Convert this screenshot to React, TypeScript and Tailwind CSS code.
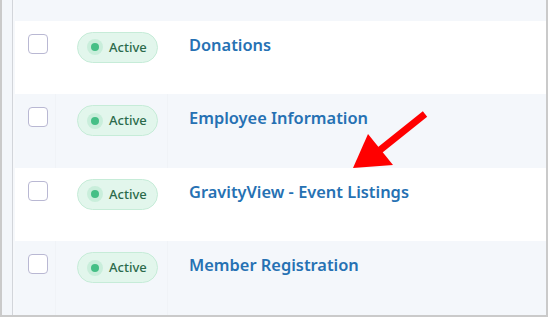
import React from "react";

type Form = { id: number; title: string };

const forms: Form[] = [
  { id: 1, title: "Donations" },
  { id: 2, title: "Employee Information" },
  { id: 3, title: "GravityView - Event Listings" },
  { id: 4, title: "Member Registration" },
];

const StatusBadge: React.FC = () => (
  <span className="inline-flex items-center h-[31px] pl-[9px] pr-[10px] rounded-full bg-[#e2f6ec] border border-[#c6ecd8]">
    <span className="flex items-center justify-center w-[16px] h-[16px] rounded-full bg-[#c9eedb]">
      <span className="w-[8px] h-[8px] rounded-full bg-[#45bf86]" />
    </span>
    <span className="ml-[6px] text-[13px] font-medium text-[#2b6b4b]">Active</span>
  </span>
);

const FormRow: React.FC<{ form: Form; striped: boolean }> = ({ form, striped }) => (
  <div className={`flex h-[74px] ${striped ? "bg-[#f4f7fb]" : "bg-white"}`}>
    <div className={`w-[41px] pl-[13px] pt-[13px] ${striped ? "border-r border-[#f0f3f7]" : ""}`}>
      <span className="block w-[20px] h-[20px] rounded-[4px] border-[1.5px] border-[#b9b8d3] bg-white" />
    </div>
    <div className={`w-[112px] pl-[21px] pt-[11px] ${striped ? "border-r border-[#f0f3f7]" : ""}`}>
      <StatusBadge />
    </div>
    <div className="flex-1 pl-[21px] pt-[12px]">
      <a className="text-[16.4px] leading-[24px] font-semibold text-[#2671b3]">{form.title}</a>
    </div>
  </div>
);

const App: React.FC = () => {
  return (
    <div
      className="relative w-[548px] h-[317px] overflow-hidden bg-white border-l-2 border-r-2 border-b-2 border-[#cacaca] flex"
      style={{ fontFamily: '"Noto Sans", "Open Sans", sans-serif' }}
    >
      {/* left gutter */}
      <div className="w-[11px] bg-[#f3f6fa] border-r border-[#d2d5da]" />
      <div className="w-[2px] bg-[#f6f8fb]" />

      <div className="flex-1 flex flex-col">
        <div className="h-[21px] bg-[#f4f7fb]" />
        {forms.map((form, i) => (
          <FormRow key={form.id} form={form} striped={i % 2 === 1} />
        ))}
      </div>

      {/* red pointer arrow */}
      <svg className="absolute left-0 top-0 pointer-events-none" width="548" height="317">
        <line x1="423" y1="114" x2="378" y2="150" stroke="#ff0000" strokeWidth="7" />
        <polygon points="351,168 366,134 391,165" fill="#ff0000" />
      </svg>
    </div>
  );
};

export default App;
